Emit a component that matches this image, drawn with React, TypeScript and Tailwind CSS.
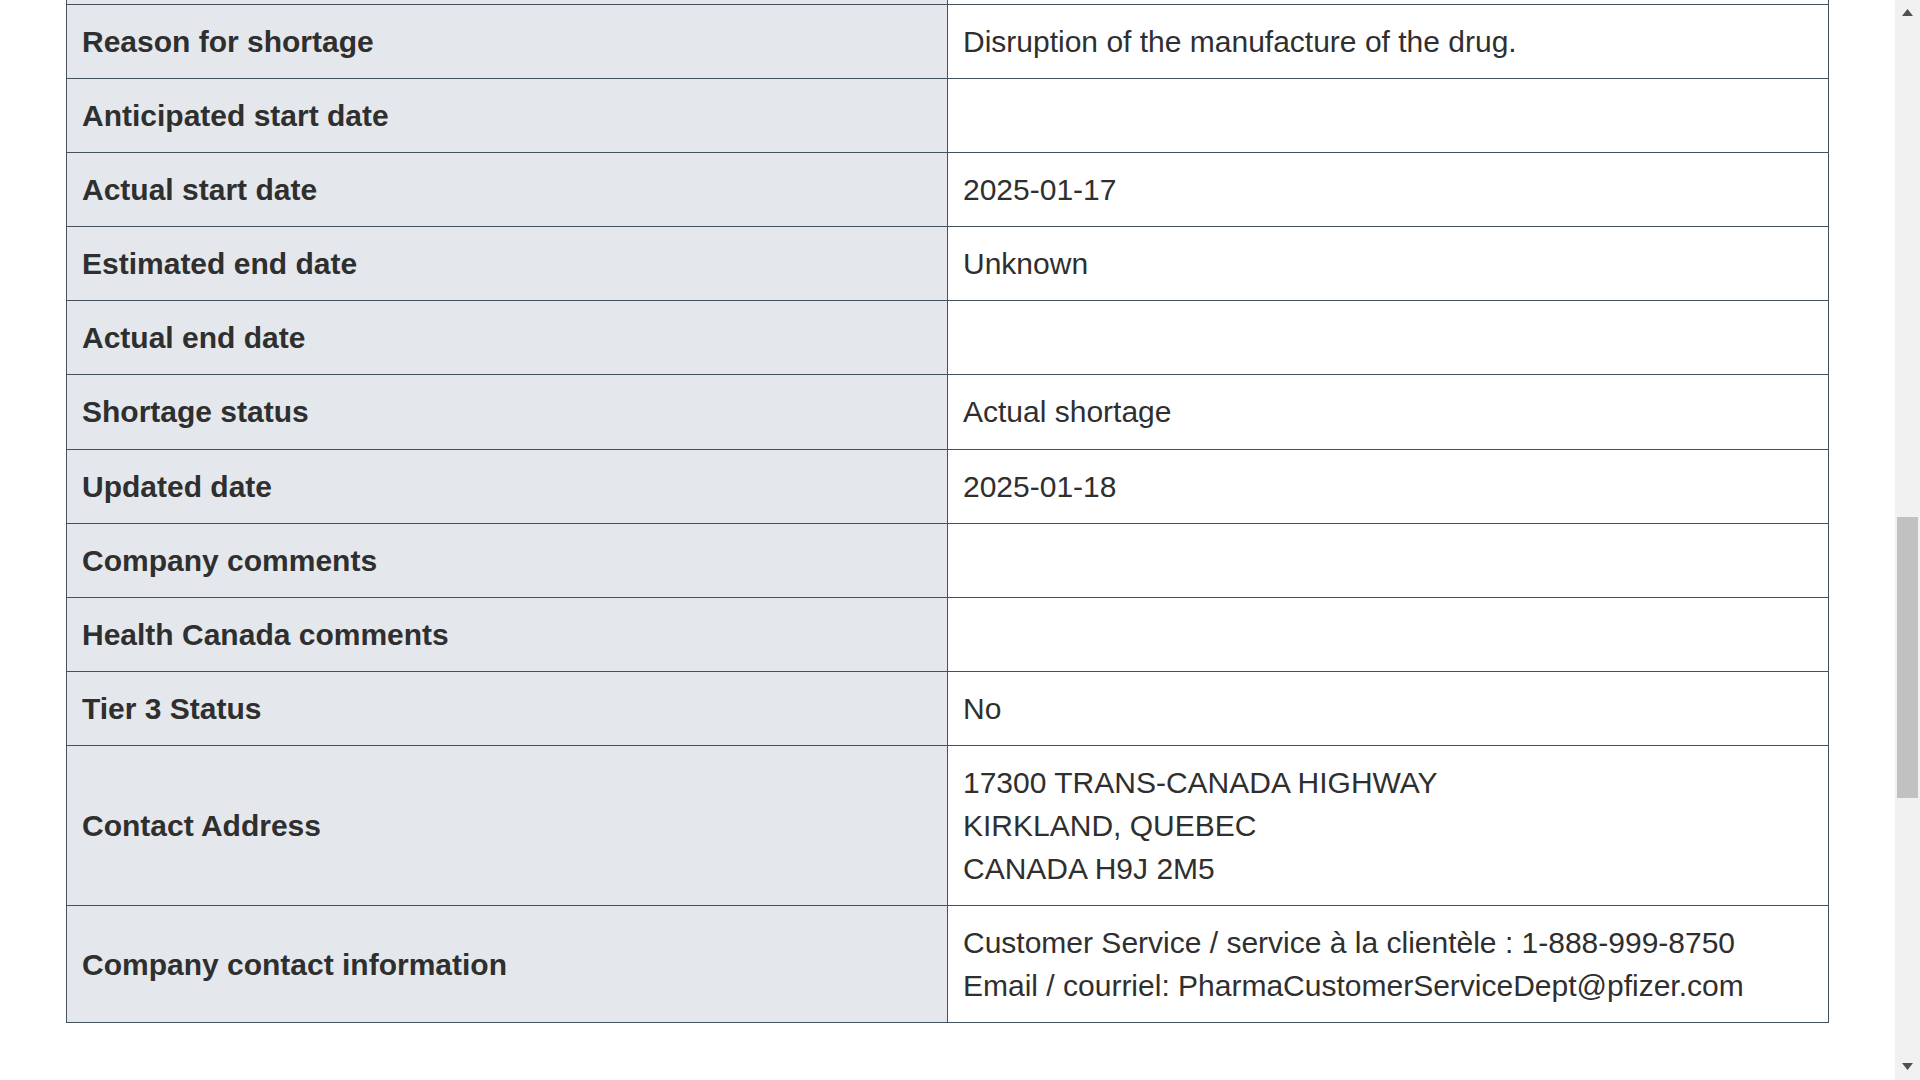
const rows: { label: string; value: string[] }[] = [
  { label: 'Reason for shortage', value: ['Disruption of the manufacture of the drug.'] },
  { label: 'Anticipated start date', value: [] },
  { label: 'Actual start date', value: ['2025-01-17'] },
  { label: 'Estimated end date', value: ['Unknown'] },
  { label: 'Actual end date', value: [] },
  { label: 'Shortage status', value: ['Actual shortage'] },
  { label: 'Updated date', value: ['2025-01-18'] },
  { label: 'Company comments', value: [] },
  { label: 'Health Canada comments', value: [] },
  { label: 'Tier 3 Status', value: ['No'] },
  {
    label: 'Contact Address',
    value: ['17300 TRANS-CANADA HIGHWAY', 'KIRKLAND, QUEBEC', 'CANADA H9J 2M5']
  },
  {
    label: 'Company contact information',
    value: [
      'Customer Service / service à la clientèle : 1-888-999-8750',
      'Email / courriel: PharmaCustomerServiceDept@pfizer.com'
    ]
  }
];

// browser scrollbar drawn at the right edge
const Scrollbar: React.FC = () => (
  <div className="flex h-screen w-[25px] shrink-0 flex-col bg-[#f1f1f1]">
    <div className="flex h-[25px] items-start justify-center pt-[9px]">
      <svg width="11" height="7" viewBox="0 0 11 7">
        <polygon points="5.5,0 11,7 0,7" fill="#505050" />
      </svg>
    </div>
    <div className="flex-1">
      <div className="mx-[2px] mt-[492px] h-[281px] bg-[#c1c1c1]" />
    </div>
    <div className="flex h-[25px] items-end justify-center pb-[10px]">
      <svg width="11" height="7" viewBox="0 0 11 7">
        <polygon points="0,0 11,0 5.5,7" fill="#505050" />
      </svg>
    </div>
  </div>
);

export default function App() {
  return (
    <div className="flex h-screen w-full overflow-hidden bg-white font-['Liberation_Sans',Arial,sans-serif] text-[30px] leading-[43.1px] text-[#2f2f2f]">
      <main className="flex-1 px-[66px]">
        {/* previous row, scrolled mostly out of view */}
        <div className="grid h-[5px] grid-cols-[882px_881px] border-b border-[#44525e]">
          <div className="border-x border-[#44525e] bg-[#e4e8ec]" />
          <div className="border-r border-[#44525e]" />
        </div>
        {rows.map(row => (
          <div
            key={row.label}
            className="grid grid-cols-[882px_881px] border-b border-[#44525e]"
          >
            <div className="flex items-center border-x border-[#44525e] bg-[#e4e8ec] px-[15px] py-[15px] font-bold">
              {row.label}
            </div>
            <div className="border-r border-[#44525e] px-[15px] py-[15px]">
              {row.value.length === 0 ? (
                <div className="h-[43.1px]" />
              ) : (
                row.value.map(line => <div key={line}>{line}</div>)
              )}
            </div>
          </div>
        ))}
      </main>
      <Scrollbar />
    </div>
  );
}
